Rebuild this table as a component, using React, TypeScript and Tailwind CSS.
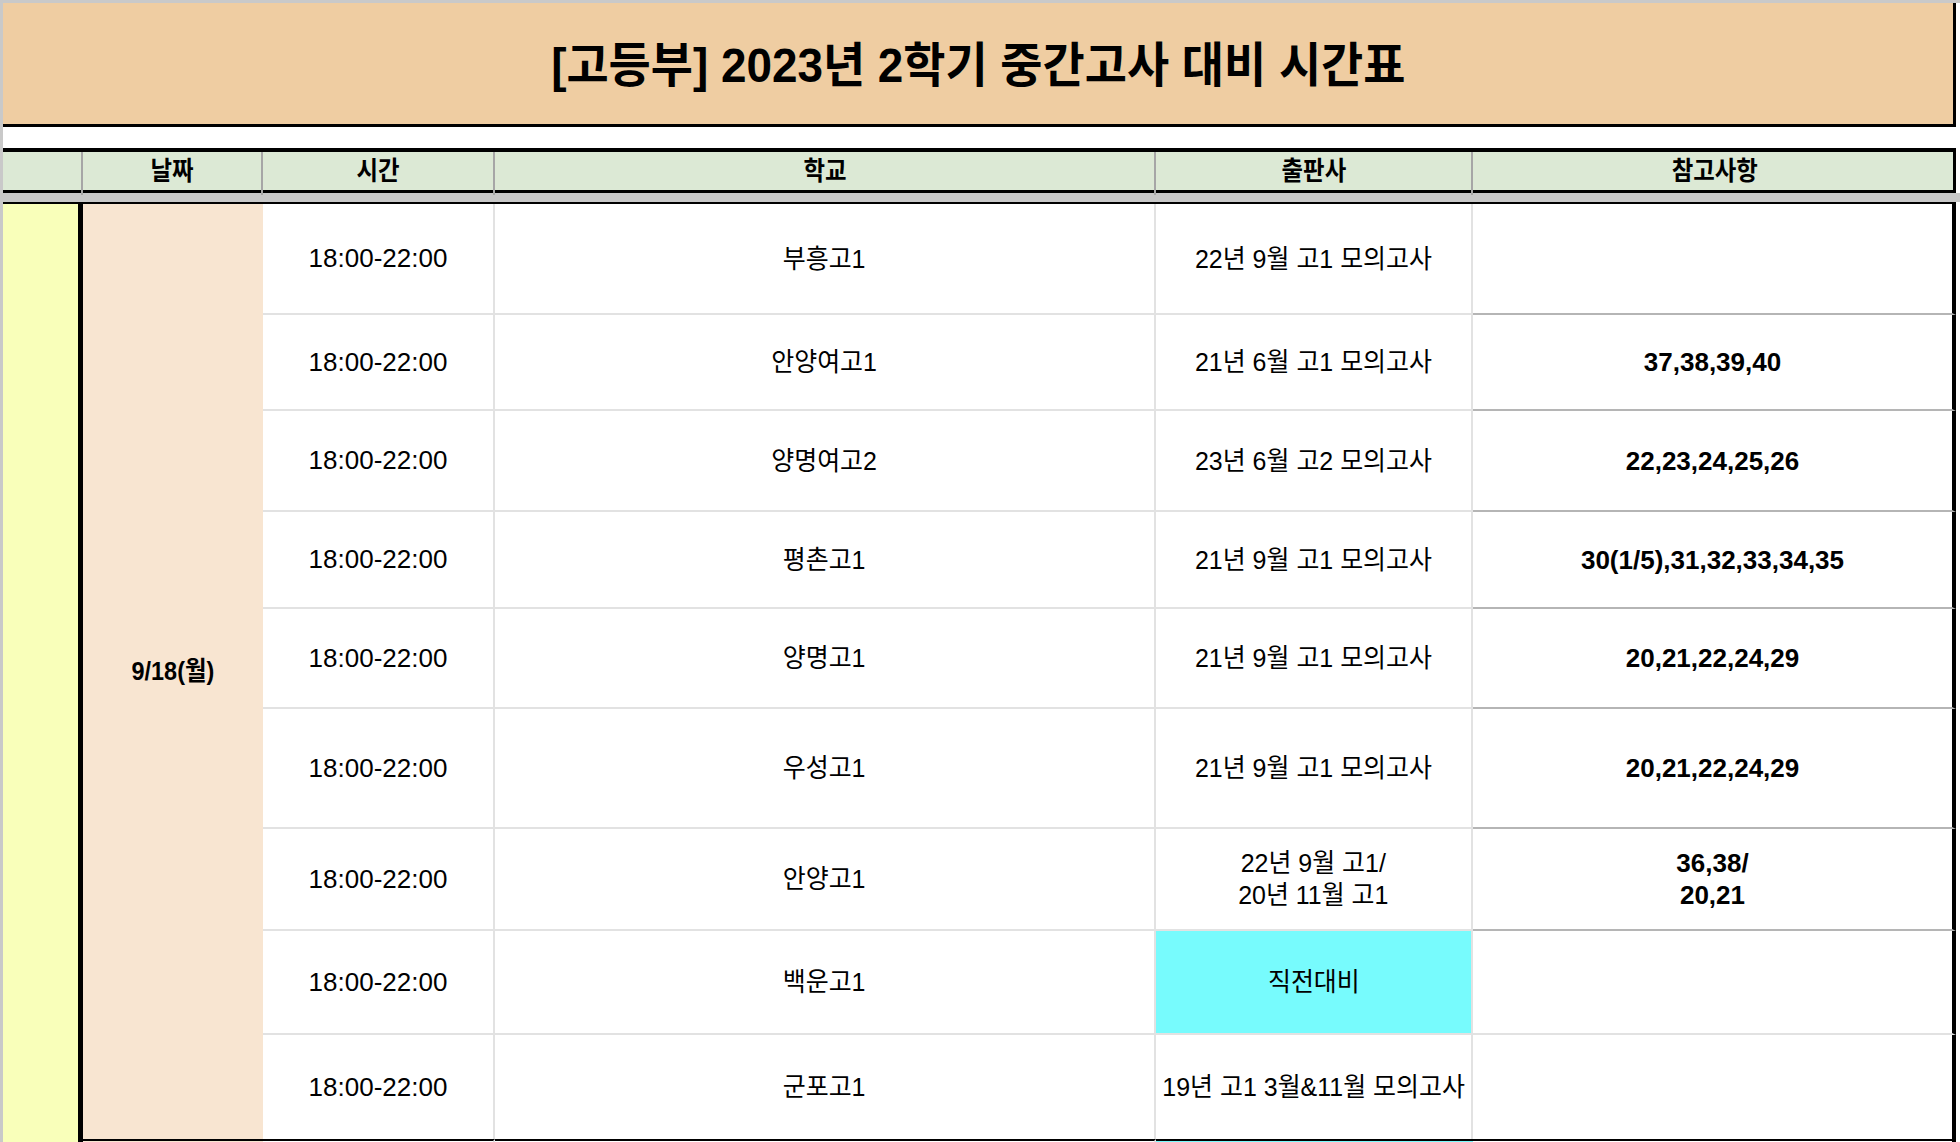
import React from 'react';

interface Row {
  school: string;
  pub: string[];
  note: string[];
  cyan?: boolean;
  noteLine: string;
}

// 9/18(월) rows, top to bottom
const rows: Row[] = [
  { school: '부흥고1', pub: ['22년 9월 고1 모의고사'], note: [], noteLine: 'border-[#b5b5b5]' },
  { school: '안양여고1', pub: ['21년 6월 고1 모의고사'], note: ['37,38,39,40'], noteLine: 'border-[#b5b5b5]' },
  { school: '양명여고2', pub: ['23년 6월 고2 모의고사'], note: ['22,23,24,25,26'], noteLine: 'border-[#b5b5b5]' },
  { school: '평촌고1', pub: ['21년 9월 고1 모의고사'], note: ['30(1/5),31,32,33,34,35'], noteLine: 'border-[#b5b5b5]' },
  { school: '양명고1', pub: ['21년 9월 고1 모의고사'], note: ['20,21,22,24,29'], noteLine: 'border-[#b5b5b5]' },
  { school: '우성고1', pub: ['21년 9월 고1 모의고사'], note: ['20,21,22,24,29'], noteLine: 'border-[#b5b5b5]' },
  { school: '안양고1', pub: ['22년 9월 고1/', '20년 11월 고1'], note: ['36,38/', '20,21'], noteLine: 'border-[#b5b5b5]' },
  { school: '백운고1', pub: ['직전대비'], note: [], cyan: true, noteLine: 'border-[#e2e2e2]' },
  { school: '군포고1', pub: ['19년 고1 3월&11월 모의고사'], note: [], noteLine: 'border-transparent' },
];

const Lines: React.FC<{ lines: string[]; narrow?: boolean }> = ({ lines, narrow = true }) => (
  <span
    className={`inline-block whitespace-nowrap text-center leading-[32px] ${narrow ? 'scale-x-96' : ''}`}
  >
    {lines.map((l, i) => (
      <React.Fragment key={i}>
        {i > 0 && <br />}
        {l}
      </React.Fragment>
    ))}
  </span>
);

const App: React.FC = () => {
  return (
    <div className="h-[1142px] w-[1960px] overflow-hidden bg-white border-t-[3px] border-[#c9c9c9] font-['Liberation_Sans','Noto_Sans_CJK_KR',sans-serif] text-[26px] text-black">
      <div className="border-l-[3px] border-[#c9c9c9]">
        {/* Title */}
        <div className="w-[1953px] h-[124px] bg-[#efcda2] border-b-[3px] border-r-[3px] border-black flex items-center justify-center">
          <h1 className="inline-block whitespace-nowrap scale-x-[0.955] text-[48px] font-bold pt-1">
            [고등부] 2023년 2학기 중간고사 대비 시간표
          </h1>
        </div>

        {/* Spacer row */}
        <div className="h-[21px] w-[1953px]" />

        {/* Header */}
        <div className="w-[1953px] h-[45px] grid grid-cols-[80px_180px_232px_661px_317px_483px] bg-[#dce9d5] border-t-4 border-b-[3px] border-r-[3px] border-black font-bold">
          <div className="border-r-2 border-[#a6a6a6]" />
          <div className="border-r-2 border-[#a6a6a6] flex items-center justify-center pb-1">
            <span className="inline-block scale-x-90">날짜</span>
          </div>
          <div className="border-r-2 border-[#a6a6a6] flex items-center justify-center pb-1">
            <span className="inline-block scale-x-90">시간</span>
          </div>
          <div className="border-r-2 border-[#a6a6a6] flex items-center justify-center pb-1">
            <span className="inline-block scale-x-90">학교</span>
          </div>
          <div className="border-r-2 border-[#a6a6a6] flex items-center justify-center pb-1">
            <span className="inline-block scale-x-90">출판사</span>
          </div>
          <div className="flex items-center justify-center pb-1">
            <span className="inline-block scale-x-90">참고사항</span>
          </div>
        </div>
      </div>

      {/* Frozen divider */}
      <div className="h-[9px] w-full bg-[#c8c8c8]" />

      <div className="border-l-[3px] border-[#c9c9c9]">
        {/* Body */}
        <div className="w-[1953px] border-t-2 border-black grid grid-cols-[80px_180px_232px_661px_317px_483px] grid-rows-[111px_96px_101px_97px_100px_120px_102px_104px_104px]">
          <div className="col-start-1 row-start-1 row-span-9 bg-[#f9ffba] border-r-[5px] border-black" />
          <div className="col-start-2 row-start-1 row-span-9 bg-[#f8e5d1] flex items-center justify-center font-bold">
            <span className="inline-block scale-x-90">9/18(월)</span>
          </div>
          {rows.map((r, i) => {
            const last = i === rows.length - 1;
            const line = last ? 'border-b-0' : 'border-b-2';
            return (
              <React.Fragment key={i}>
                <div className={`col-start-3 ${line} border-r-2 border-[#e2e2e2] flex items-center justify-center`}>
                  18:00-22:00
                </div>
                <div className={`col-start-4 ${line} border-r-2 border-[#e2e2e2] flex items-center justify-center`}>
                  <Lines lines={[r.school]} />
                </div>
                <div
                  className={`col-start-5 ${line} border-r-2 border-[#e2e2e2] flex items-center justify-center ${
                    r.cyan ? 'bg-[#77fbfd]' : ''
                  }`}
                >
                  <Lines lines={r.pub} />
                </div>
                <div className={`col-start-6 ${line} ${r.noteLine} border-r-4 border-r-black flex items-center justify-center font-bold`}>
                  {r.note.length > 0 && <Lines lines={r.note} narrow={false} />}
                </div>
              </React.Fragment>
            );
          })}
        </div>

        {/* Start of next date block */}
        <div className="w-[1953px] h-[40px] grid grid-cols-[80px_180px_232px_661px_317px_483px]">
          <div className="bg-[#f9ffba] border-r-[5px] border-black" />
          <div className="bg-[#f8e5d1] border-t-2 border-black" />
          <div className="border-t-2 border-black border-r-2 border-r-[#e2e2e2]" />
          <div className="border-t-2 border-black border-r-2 border-r-[#e2e2e2]" />
          <div className="bg-[#77fbfd] border-t-2 border-black" />
          <div className="border-t-2 border-black border-r-4" />
        </div>
      </div>
    </div>
  );
};

export default App;
